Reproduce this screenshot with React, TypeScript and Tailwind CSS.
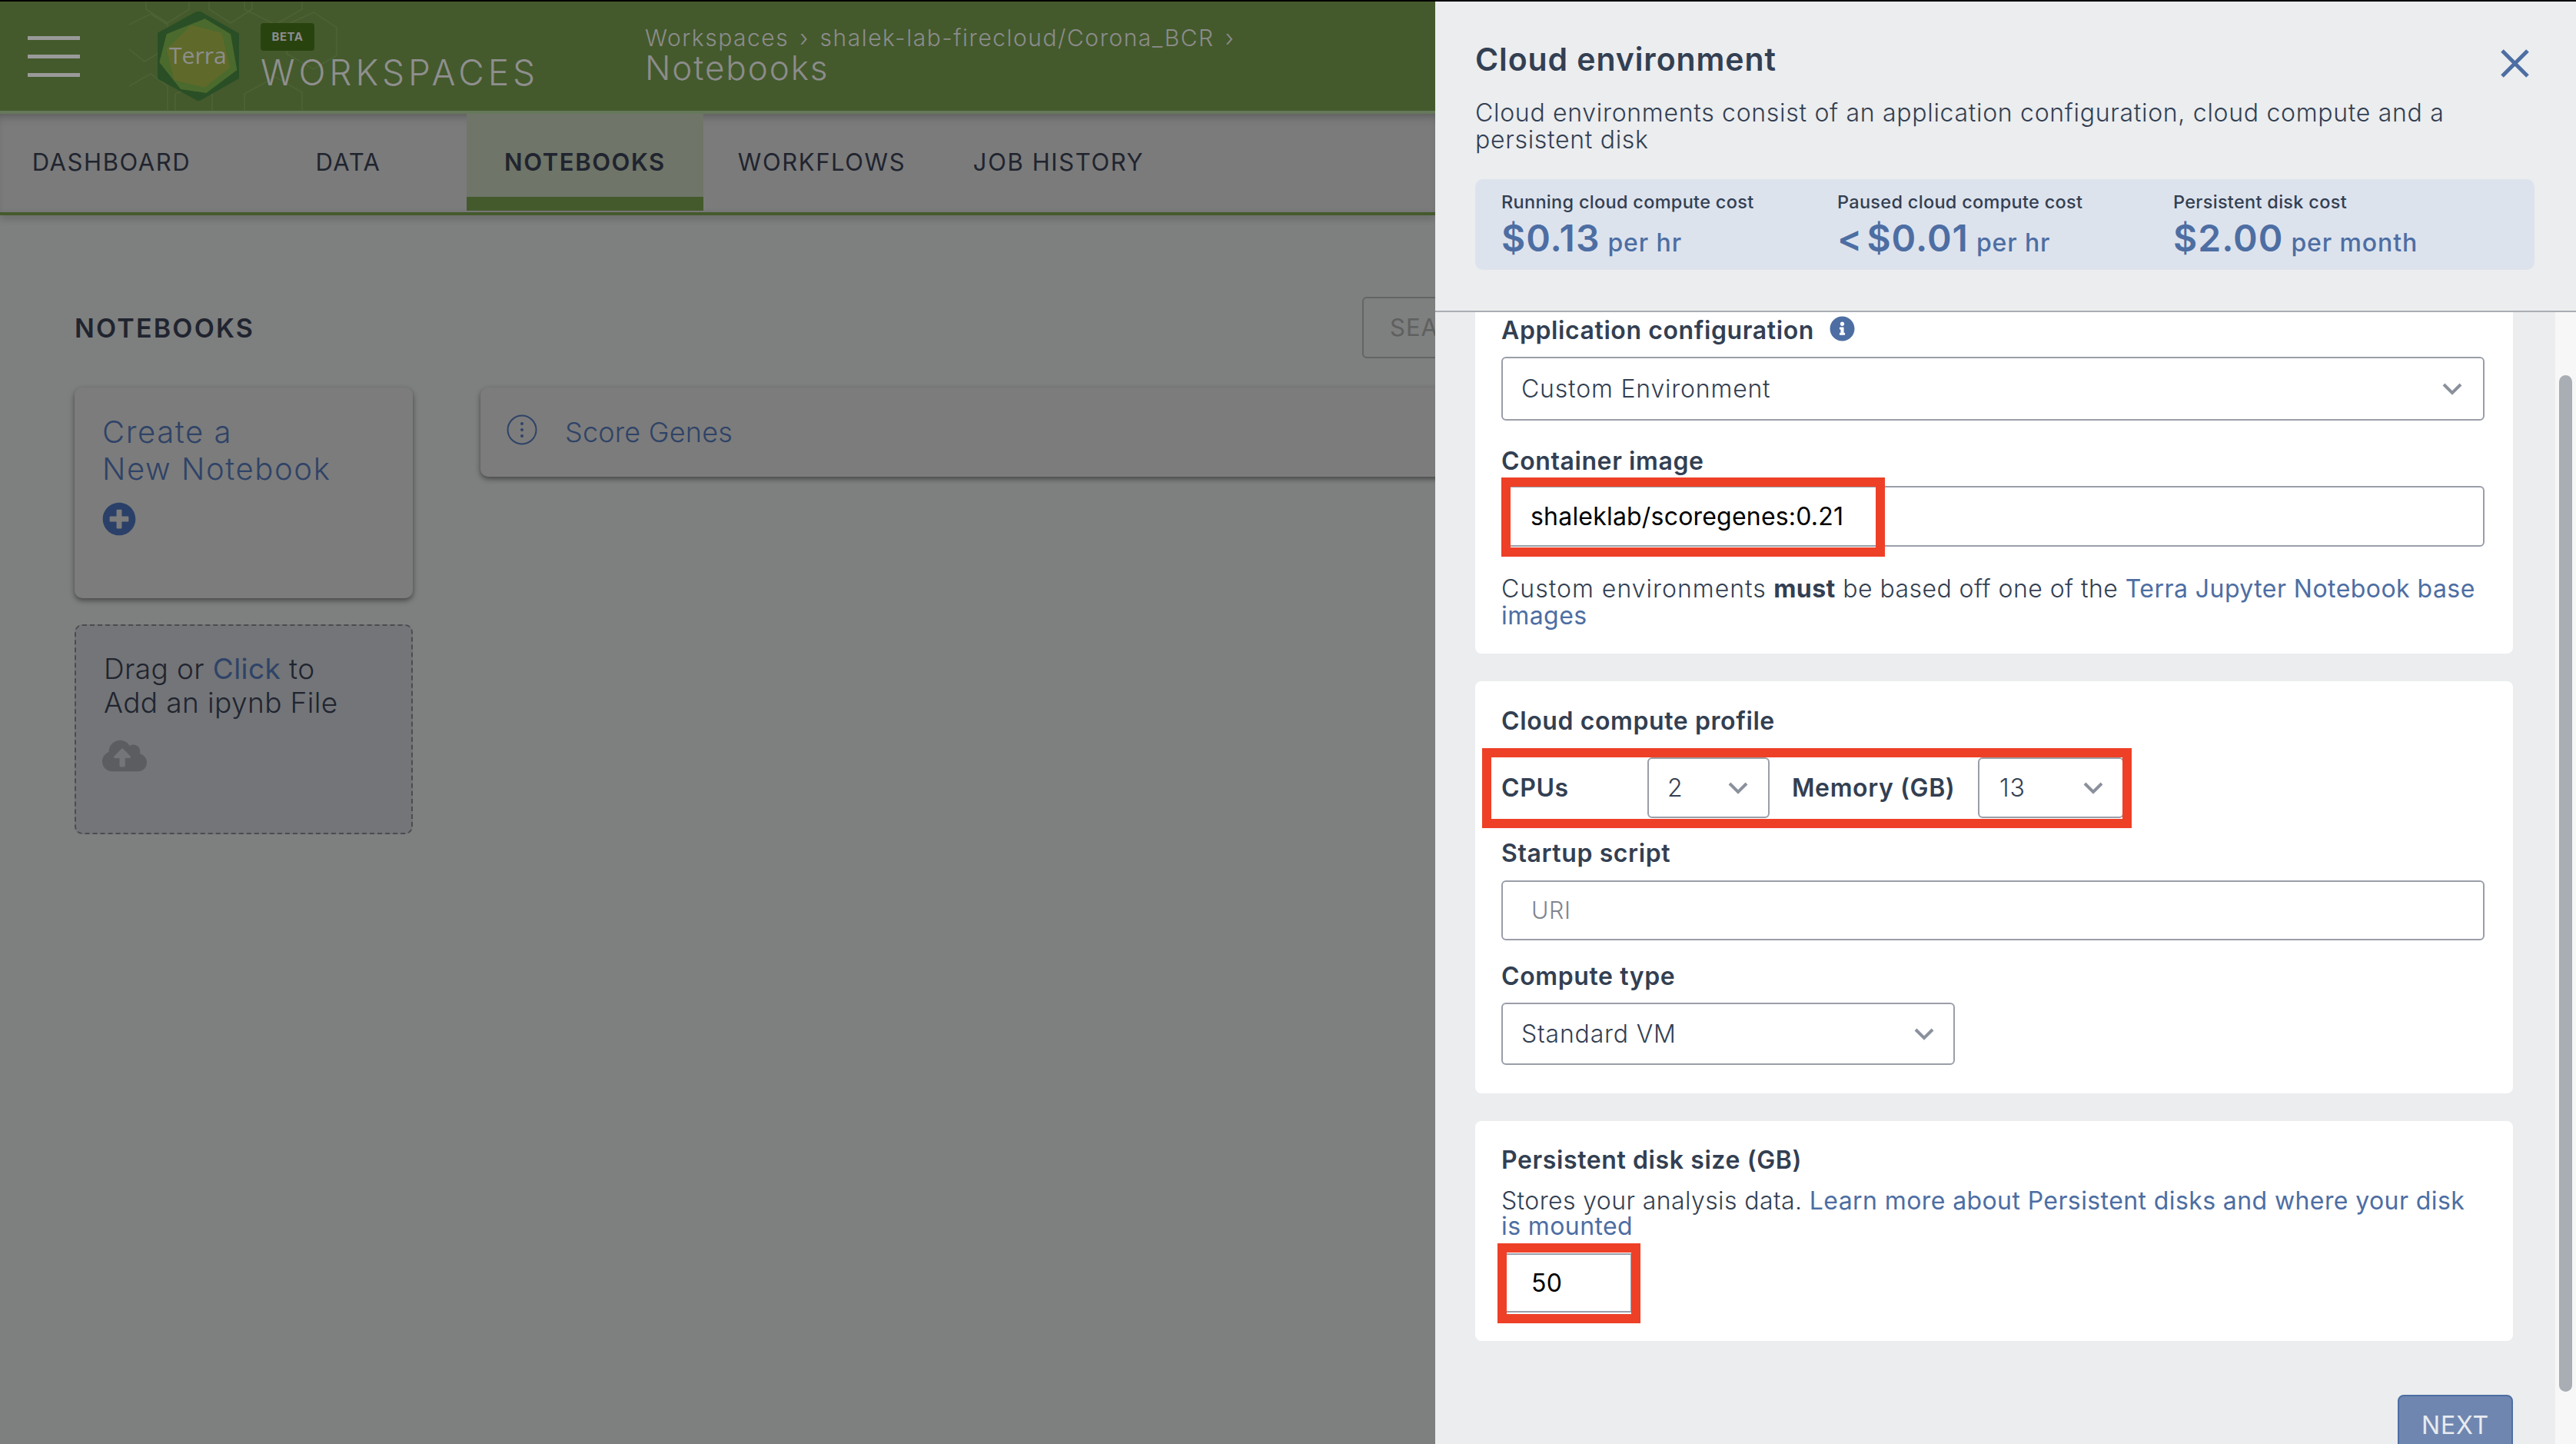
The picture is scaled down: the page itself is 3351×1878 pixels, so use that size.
import { FaCloudUploadAlt, FaInfoCircle, FaPlusCircle } from "react-icons/fa";

function Chevron() {
  return (
    <svg width="28" height="18" viewBox="0 0 28 18" fill="none" className="shrink-0">
      <path d="M3 3 L14 14 L25 3" stroke="#8b919c" strokeWidth="4" />
    </svg>
  );
}

function Select({ label, className }: { label: string; className: string }) {
  return (
    <div className={`flex items-center justify-between rounded-[6px] border-2 border-[#9a9ea8] bg-white ${className}`}>
      <span className="text-[32px] font-light tracking-[0.8px] text-[#333f52]">{label}</span>
      <Chevron />
    </div>
  );
}

function Label({ children, className = "" }: { children: React.ReactNode; className?: string }) {
  return <div className={`text-[32px] font-semibold leading-[36px] tracking-[0.6px] text-[#333f52] ${className}`}>{children}</div>;
}

function Tab({ label, active }: { label: string; active?: boolean }) {
  return (
    <div className={`relative flex h-[126px] w-[308px] items-center justify-center text-[31px] tracking-[1.6px] text-[#20242f] ${active ? "bg-[#6f7568] font-semibold" : "font-normal"}`}>
      <span>{label}</span>
      {active && <div className="absolute bottom-0 left-0 h-[18px] w-full bg-[#445a2c]" />}
    </div>
  );
}

function Cost({ label, value, unit, className }: { label: string; value: string; unit: string; className: string }) {
  return (
    <div className={className}>
      <div className="text-[23.5px] font-medium leading-[30px] tracking-[0.3px] text-[#333f52]">{label}</div>
      <div className="mt-[7px] flex items-baseline gap-[10px] leading-[50px] text-[#4d6ea3]">
        <span className="text-[48px] font-semibold tracking-[1px] [word-spacing:-8px]">{value}</span>
        <span className="text-[32px] font-medium tracking-[0.9px]">{unit}</span>
      </div>
    </div>
  );
}

function Logo() {
  return (
    <svg width="106" height="116" viewBox="135 42 318 348" className="shrink-0">
      <polygon points="295,42 450,130 450,300 295,388 135,300 135,130" fill="#2a4f26" stroke="#2a4f26" strokeWidth="8" strokeLinejoin="round" />
      <polygon points="320,70 420,130 445,270 325,360 225,345 142,240 170,130" fill="#4b6a2d" />
      <polygon points="265,95 385,125 418,260 320,338 200,310 170,190" fill="#5f6a2a" />
      <text x="292" y="246" textAnchor="middle" fontFamily="'Open Sans', sans-serif" fontSize="90" fill="#8e8e8e">Terra</text>
    </svg>
  );
}

export default function App() {
  return (
    <div className="flex h-[1878px] w-[3351px] overflow-hidden bg-black pt-[2px] font-['Inter',sans-serif]">
      <div className="flex w-[1867px] shrink-0 flex-col overflow-hidden bg-[#7e7f7f]">
        <div className="relative flex h-[142px] shrink-0 items-center bg-[#445a2c] pl-[36px]">
          <svg width="300" height="142" viewBox="0 0 300 142" fill="none" className="absolute left-[168px] top-0" stroke="#4d6336" strokeWidth="1.5">
            <path d="M22 0 V10 L50 28 L78 10 V0 M104 0 V10 L132 28 L160 10 V0 M150 0 V10 L190 30 L225 10 V0 M0 30 L28 16 L50 30 V60 L20 78 L0 62 M0 110 L28 94 L50 110 V142 M60 142 V120 L88 108 L108 120 V142 M150 142 V120 L190 98 L225 118 V142 M205 30 L240 14 L270 34 V70 L240 88 L205 68 Z" />
          </svg>
          <div className="relative flex w-[68px] shrink-0 flex-col gap-[19px]">
            <div className="h-[5px] bg-[#9a9a9a]" />
            <div className="h-[5px] bg-[#9a9a9a]" />
            <div className="h-[5px] bg-[#9a9a9a]" />
          </div>
          <div className="relative ml-[101px]"><Logo /></div>
          <div className="relative ml-[28px] flex w-[500px] shrink-0 flex-col self-start pt-[28px]">
            <div className="flex h-[36px] w-[70px] items-center justify-center rounded-[4px] bg-[#29430f] text-[15px] font-bold tracking-[0.5px] text-[#8e8e8e]">BETA</div>
            <div className="mt-[1px] text-[46px] font-light leading-[54px] tracking-[5px] text-[#8f8f8f]">WORKSPACES</div>
          </div>
          <div className="relative flex flex-col self-start pt-[27px] text-[#8c8c8c]">
            <div className="flex text-[30px] font-light leading-[40px] tracking-[1.5px]">
              <span>Workspaces</span>
              <span className="mx-[14px]">›</span>
              <span>shalek-lab-firecloud/Corona_BCR</span>
              <span className="ml-[14px]">›</span>
            </div>
            <div className="-mt-[3px] text-[44px] font-light leading-[44px] tracking-[1.9px]">Notebooks</div>
          </div>
        </div>
        <div className="h-[4px] shrink-0 bg-[#66785a]" />
        <div className="flex h-[128px] shrink-0 flex-col bg-[#7b7b7b] shadow-[inset_0_10px_14px_-8px_rgba(0,0,0,0.3)]">
          <div className="-ml-[9px] flex">
            <Tab label="DASHBOARD" />
            <Tab label="DATA" />
            <Tab label="NOTEBOOKS" active />
            <Tab label="WORKFLOWS" />
            <Tab label="JOB HISTORY" />
          </div>
        </div>
        <div className="h-[4px] shrink-0 bg-[#445a2c] shadow-[0_4px_8px_rgba(0,0,0,0.3)]" />
        <div className="flex min-h-0 flex-1 flex-col pl-[97px]">
          <div className="mt-[106px] flex h-[80px] items-center">
            <div className="w-[236px] shrink-0 whitespace-nowrap text-[34px] font-semibold tracking-[2.2px] text-[#20242f]">NOTEBOOKS</div>
            <div className="ml-[1439px] flex h-[80px] w-[400px] shrink-0 items-center rounded-[6px] border-2 border-[#636464] pl-[34px] text-[31px] tracking-[1px] text-[#5f6060]">SEARCH</div>
          </div>
          <div className="mt-[38px] flex">
            <div className="flex w-[440px] shrink-0 flex-col gap-[34px]">
              <div className="h-[274px] rounded-[10px] bg-[#7c7c7c] pl-[36px] pt-[34px] text-[40px] font-light leading-[48px] tracking-[1.6px] text-[#2f4367] shadow-[0_3px_7px_rgba(0,0,0,0.45)]">
                <div>Create a</div>
                <div>New Notebook</div>
                <FaPlusCircle className="mt-[19px] text-[#2a4069]" size={44} />
              </div>
              <div className="h-[273px] rounded-[10px] border-2 border-dashed border-[#4b4c4e] bg-[#737578] pl-[36px] pt-[34px] text-[37px] font-light leading-[44px] tracking-[0.4px] text-[#20242f]">
                <div>Drag or <span className="font-normal text-[#2f4367]">Click</span> to</div>
                <div>Add an ipynb File</div>
                <FaCloudUploadAlt className="mt-[18px] -ml-[2px] text-[#5c5d60]" size={58} />
              </div>
            </div>
            <div className="ml-[88px] flex h-[116px] w-[1400px] shrink-0 items-center rounded-[10px] bg-[#7c7c7c] pl-[34px] text-[36px] font-light tracking-[0.2px] text-[#2f4367] shadow-[0_3px_7px_rgba(0,0,0,0.45)]">
              <svg width="40" height="40" viewBox="0 0 40 40" fill="none" className="-mt-[6px] shrink-0">
                <circle cx="20" cy="20" r="18.5" stroke="#2f4367" strokeWidth="2" />
                <circle cx="20" cy="12" r="2" fill="#2f4367" />
                <circle cx="20" cy="20" r="2" fill="#2f4367" />
                <circle cx="20" cy="28" r="2" fill="#2f4367" />
              </svg>
              <span className="ml-[36px]">Score Genes</span>
            </div>
          </div>
        </div>
      </div>

      <div className="flex min-w-0 flex-1 flex-col bg-[#ebedef]">
        <div className="relative h-[404px] shrink-0 border-b-2 border-[#a9adb4] px-[52px] pt-[50px] text-[#333f52]">
          <div className="text-[41px] font-semibold leading-[50px] tracking-[0.9px]">Cloud environment</div>
          <svg width="37" height="37" viewBox="0 0 37 37" fill="none" className="absolute left-[1386px] top-[62px]">
            <path d="M2 2 L35 35 M35 2 L2 35" stroke="#4d6ea3" strokeWidth="5" />
          </svg>
          <div className="mt-[27px] text-[32px] font-light leading-[35px] tracking-[0.7px]">
            Cloud environments consist of an application configuration, cloud compute and a<br />persistent disk
          </div>
          <div className="mt-[34px] flex h-[118px] w-[1378px] rounded-[10px] bg-[#dde3ed] pl-[34px] pt-[15px]">
            <Cost className="w-[437px]" label="Running cloud compute cost" value="$0.13" unit="per hr" />
            <Cost className="w-[437px]" label="Paused cloud compute cost" value="< $0.01" unit="per hr" />
            <Cost className="w-[437px]" label="Persistent disk cost" value="$2.00" unit="per month" />
          </div>
        </div>

        <div className="flex min-h-0 flex-1 overflow-hidden">
          <div className="ml-[52px] flex w-[1350px] shrink-0 flex-col">
            <div className="rounded-b-[8px] bg-white px-[34px] pb-[32px] pt-[6px]">
              <div className="flex items-center gap-[20px]">
                <Label>Application configuration</Label>
                <FaInfoCircle className="-mt-[6px] text-[#4d6ea3]" size={33} />
              </div>
              <Select className="mt-[16px] h-[83px] w-[1279px] pl-[24px] pr-[26px]" label="Custom Environment" />
              <Label className="mt-[35px]">Container image</Label>
              <div className="relative mt-[14px]">
                <div className="flex h-[79px] w-[1279px] items-center rounded-[6px] border-2 border-[#9a9ea8] pl-[36px] text-[32px] tracking-[0.2px] text-black">shaleklab/scoregenes:0.21</div>
                <div className="absolute -top-[11px] left-0 h-[103px] w-[499px] border-[12px] border-[#ee4027]" />
              </div>
              <div className="mt-[37px] text-[32px] font-light leading-[35px] tracking-[0.45px] text-[#333f52]">
                <span className="tracking-[1px]">Custom environments</span> <span className="font-bold">must</span> be based off one of the <span className="font-normal text-[#4d6ea3]">Terra Jupyter Notebook base<br />images</span>
              </div>
            </div>

            <div className="mt-[36px] rounded-[8px] bg-white px-[34px] pb-[37px] pt-[34px]">
              <Label>Cloud compute profile</Label>
              <div className="relative mt-[29px] flex h-[79px] items-center">
                <Label className="w-[190px] shrink-0">CPUs</Label>
                <Select className="h-[79px] w-[159px] shrink-0 pl-[24px] pr-[25px]" label="2" />
                <Label className="ml-[29px] w-[242px] shrink-0">Memory (GB)</Label>
                <Select className="h-[79px] w-[190px] shrink-0 pl-[26px] pr-[24px]" label="13" />
                <div className="absolute -left-[25px] -top-[12px] h-[104px] w-[845px] border-[12px] border-[#ee4027]" />
              </div>
              <Label className="mt-[28px]">Startup script</Label>
              <div className="mt-[17px] flex h-[78px] w-[1279px] items-center rounded-[6px] border-2 border-[#9a9ea8] pl-[37px] text-[30.5px] font-light tracking-[0.6px] text-[#7f8590]">URI</div>
              <Label className="mt-[29px]">Compute type</Label>
              <Select className="mt-[16px] h-[81px] w-[590px] pl-[24px] pr-[24px]" label="Standard VM" />
            </div>

            <div className="mt-[36px] rounded-[8px] bg-white px-[34px] pb-[37px] pt-[33px]">
              <Label>Persistent disk size (GB)</Label>
              <div className="mt-[18px] text-[32px] font-light leading-[33px] tracking-[0.4px] text-[#333f52]">
                Stores your analysis data. <span className="font-normal text-[#4d6ea3]">Learn more about Persistent disks and where your disk<br />is mounted</span>
              </div>
              <div className="relative mt-[19px] flex h-[77px] w-[170px] items-center border-2 border-[#9a9ea8] pl-[37px] text-[32px] tracking-[0.4px] text-black">
                50
                <div className="absolute -left-[7px] -top-[15px] h-[104px] w-[186px] border-[12px] border-[#ee4027]" />
              </div>
            </div>

            <div className="mt-[70px] flex justify-end">
              <div className="flex h-[80px] w-[150px] shrink-0 items-center justify-center rounded-[8px] border-2 border-[#4d6ea3] bg-[#6f87b0] text-[32px] tracking-[0.8px] text-[#e8ebf0]">NEXT</div>
            </div>
          </div>
          <div className="ml-[55px] w-[27px] shrink-0 bg-[#f7f7f8] px-[5px] pt-[82px]">
            <div className="h-[1322px] rounded-full bg-[#a9adb4]" />
          </div>
        </div>
      </div>
    </div>
  );
}
